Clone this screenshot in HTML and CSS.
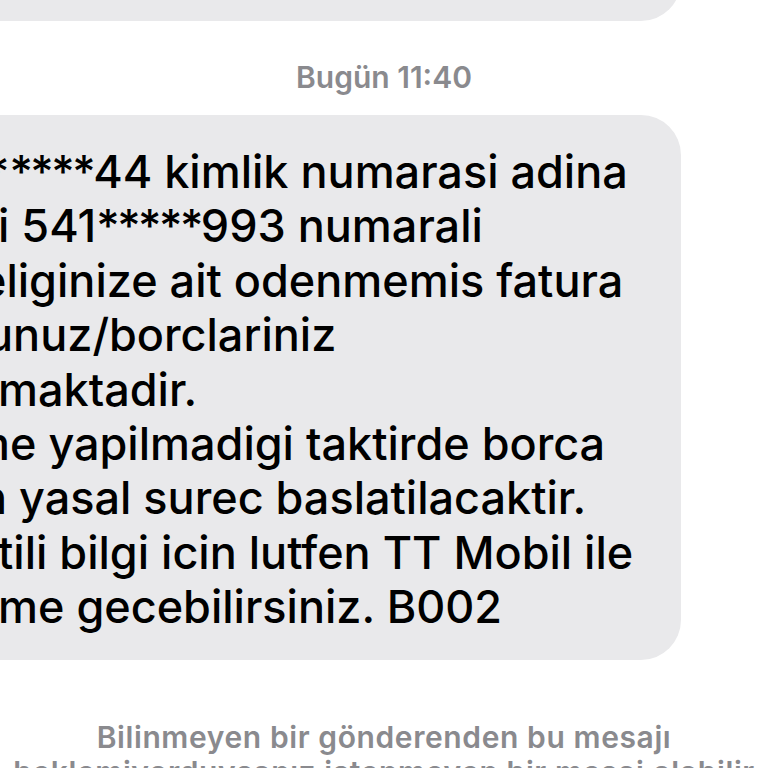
FILE: index.html
```html
<!DOCTYPE html>
<html lang="tr">
<head>
<meta charset="utf-8">
<link rel="stylesheet" href="styles.css">
</head>
<body>
<div class="thread">
  <div class="row row-top">
    <div class="bubble bubble-prev"></div>
  </div>
  <div class="stamp">Bugün 11:40</div>
  <div class="row">
    <div class="bubble bubble-main">
      <div class="line"><span class="cut cut-sm">*</span><span class="mask">****</span>44 kimlik numarasi adina</div>
      <div class="line">i 541<span class="mask">*****</span>993 numarali</div>
      <div class="line"><span class="cut cut-md">e</span>liginize ait odenmemis fatura</div>
      <div class="line"><span class="cut cut-sm">u</span>nuz/borclariniz</div>
      <div class="line">maktadir.</div>
      <div class="line"><span class="cut cut-lg">m</span>e yapilmadigi taktirde borca</div>
      <div class="line"><span class="cut cut-md">n</span> yasal surec baslatilacaktir.</div>
      <div class="line">tili bilgi icin lutfen TT Mobil ile</div>
      <div class="line">me gecebilirsiniz. B002</div>
    </div>
  </div>
  <div class="notice">
    <div class="notice-line">Bilinmeyen bir gönderenden bu mesajı</div>
    <div class="notice-line">beklemiyorduysanız istenmeyen bir mesaj olabilir</div>
  </div>
</div>
</body>
</html>
```

FILE: styles.css
```css
html, body {
  margin: 0;
  padding: 0;
  background: #ffffff;
  width: 768px;
  height: 768px;
  overflow: hidden;
}

.thread {
  display: flex;
  flex-direction: column;
  width: 768px;
  font-family: "Inter", "Noto Sans", sans-serif;
}

.row {
  display: flex;
  justify-content: flex-end;
  padding-right: 87px;
}

.row-top {
  margin-top: -60px;
}

.bubble {
  background: #e9e9eb;
  border-radius: 40px;
  margin-left: -60px;
  flex: 1;
}

.bubble-prev {
  height: 81px;
}

.stamp {
  margin-top: 38px;
  height: 36px;
  line-height: 36px;
  text-align: center;
  font-size: 30px;
  font-weight: 600;
  color: #8a8a8e;
}

.stamp + .row {
  margin-top: 20px;
}

.bubble-main {
  padding: 30px 0 25px 58px;
  color: #000;
  font-size: 45px;
  font-weight: 500;
  line-height: 54.4px;
  white-space: nowrap;
  overflow: hidden;
}

.mask {
  letter-spacing: -2.5px;
}

.cut {
  display: inline-block;
}

.cut-sm {
  margin-left: -12px;
}

.cut-md {
  margin-left: -18px;
}

.cut-lg {
  margin-left: -28px;
}

.notice {
  margin-top: 60px;
  display: flex;
  flex-direction: column;
  align-items: center;
  font-size: 30px;
  font-weight: 600;
  letter-spacing: 0.6px;
  line-height: 35px;
  color: #8a8a8e;
}

.notice-line {
  white-space: nowrap;
}
```
